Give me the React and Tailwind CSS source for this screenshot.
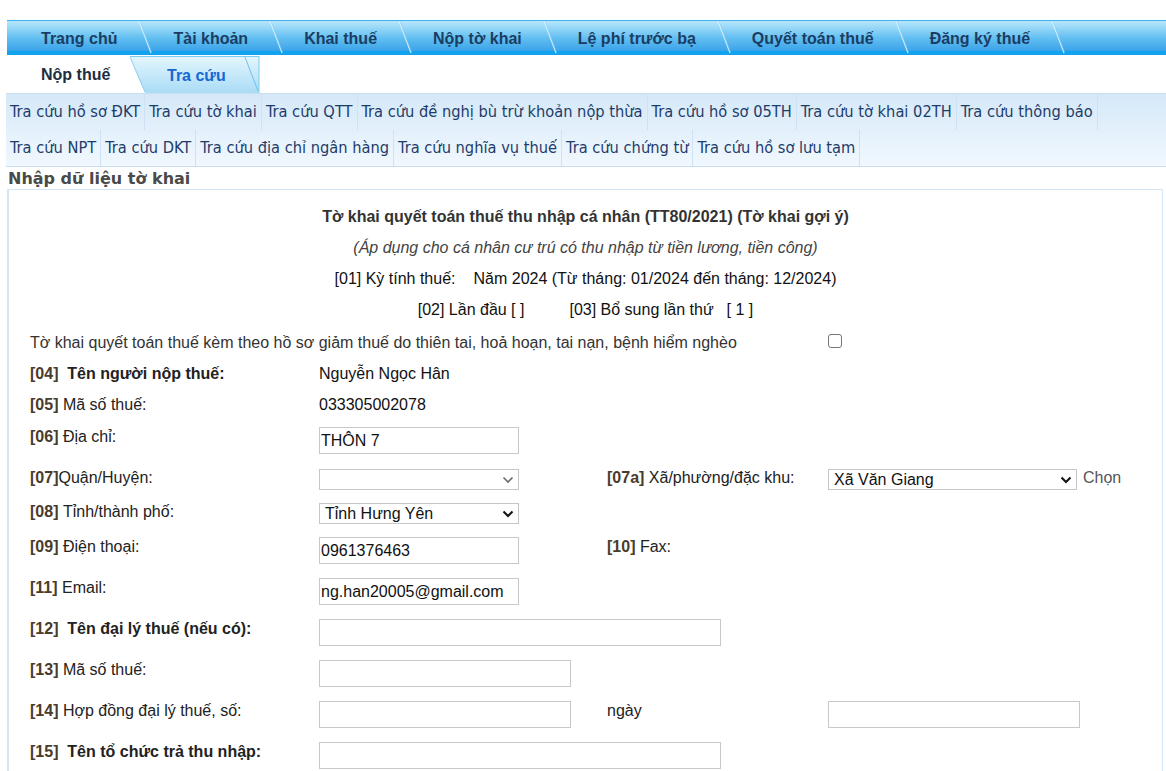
import React from 'react';

const topTabs = ['Trang chủ', 'Tài khoản', 'Khai thuế', 'Nộp tờ khai', 'Lệ phí trước bạ', 'Quyết toán thuế', 'Đăng ký thuế'];

const subRow1 = [
  'Tra cứu hồ sơ ĐKT',
  'Tra cứu tờ khai',
  'Tra cứu QTT',
  'Tra cứu đề nghị bù trừ khoản nộp thừa',
  'Tra cứu hồ sơ 05TH',
  'Tra cứu tờ khai 02TH',
  'Tra cứu thông báo',
];

const subRow2 = [
  'Tra cứu NPT',
  'Tra cứu DKT',
  'Tra cứu địa chỉ ngân hàng',
  'Tra cứu nghĩa vụ thuế',
  'Tra cứu chứng từ',
  'Tra cứu hồ sơ lưu tạm',
];

function Sep() {
  return (
    <svg className="absolute right-[-7px] top-0 h-[35px] w-[14px]" viewBox="0 0 14 35">
      <line x1="1" y1="0" x2="13" y2="32" stroke="#dcf4fe" strokeWidth="1.2" opacity="0.9" />
      <line x1="2" y1="0" x2="14" y2="32" stroke="#7cc8f0" strokeWidth="0.8" opacity="0.5" />
    </svg>
  );
}

function Code({ children }) {
  return <b className="text-[#4a3b2b]">{children}</b>;
}

function Input({ w = 'w-[200px]', value = '' }) {
  return (
    <div className={`${w} h-[27px] border border-[#c8c8c8] bg-white px-[1px] leading-[25px] text-[#111]`}>
      {value}
    </div>
  );
}

function Select({ w = 'w-[200px]', value = '', faded = false }) {
  return (
    <div className={`${w} h-[21px] border border-[#c6c6c6] bg-white flex items-center justify-between pl-[5px] pr-[4px] text-[#111] leading-[19px]`}>
      <span>{value}</span>
      <svg width="12" height="8" viewBox="0 0 12 8">
        <path d="M1.5 1.5 L6 6 L10.5 1.5" fill="none" stroke={faded ? '#6b6b6b' : '#111'} strokeWidth={faded ? 1.6 : 2} />
      </svg>
    </div>
  );
}

export default function App() {
  return (
    <div className="w-[1166px] h-[771px] overflow-hidden bg-white font-['Liberation_Sans',Arial,sans-serif] text-[16px]">
      <div className="h-[20px]" />

      {/* top navigation */}
      <div className="ml-[7px] pl-[6px] h-[35px] flex border-t border-[#3eb0f0] bg-gradient-to-b from-[#b6e7fb] via-[#62bff1] to-[#2a9ae6] shadow-[inset_0_-4px_0_#12a3ef]">
        {topTabs.map((t) => (
          <div key={t} className="relative px-[28px] h-full flex items-center pt-[1px] font-bold text-[#1b3d63] whitespace-nowrap">
            {t}
            <Sep />
          </div>
        ))}
      </div>

      {/* second level */}
      <div className="h-[38px] flex items-end">
        <div className="w-[130px] h-full flex items-center pl-[41px] pt-[2px] font-bold text-[#1d2d42]">Nộp thuế</div>
        <div className="relative w-[130px] h-[37px] flex items-center pl-[37px] pt-[2px] font-bold text-[#1767d2]">
          <svg className="absolute inset-0" width="130" height="37" viewBox="0 0 130 37">
            <defs>
              <linearGradient id="tg" x1="0" y1="0" x2="0" y2="1">
                <stop offset="0" stopColor="#e3f5fd" />
                <stop offset="1" stopColor="#a9dcf6" />
              </linearGradient>
            </defs>
            <path d="M0 1 L129 1 L129 37 L15 37 Z" fill="url(#tg)" />
            <path d="M0 1 L15 36" stroke="#8fd0f2" strokeWidth="1" />
            <path d="M115 1 L128 35" stroke="#6cc1ee" strokeWidth="1" />
            <path d="M0 0.5 L129 0.5 M129 0 L129 37" stroke="#7ccbf1" strokeWidth="1" />
          </svg>
          <span className="relative">Tra cứu</span>
        </div>
      </div>

      {/* sub menu */}
      <div className="ml-[6px] h-[74px] border-y border-[#c9def0] bg-gradient-to-b from-[#d5e8f8] to-[#f1f8fe] font-['Tahoma','DejaVu_Sans_Condensed',sans-serif] text-[16.3px] text-[#1e3c6a]">
        {[subRow1, subRow2].map((row, i) => (
          <div key={i} className="h-[36px] flex">
            {row.map((s) => (
              <div key={s} className="px-[4px] pt-[1px] h-full flex items-center border-r border-[#cfe2f3] whitespace-nowrap">
                {s}
              </div>
            ))}
          </div>
        ))}
      </div>

      {/* section header */}
      <div className="ml-[8px] h-[22px] pt-[2px] flex items-center font-['DejaVu_Sans',Verdana,sans-serif] font-bold text-[#4a4a4a] text-[16px]">
        Nhập dữ liệu tờ khai
      </div>

      {/* panel */}
      <div className="ml-[7px] mr-[3px] border-l-2 border-r border-t border-[#d4e6f6] text-[#222] pt-[11px]">
        <div className="flex flex-col items-center">
          <div className="h-[31px] flex items-center font-bold text-[#333]">
            Tờ khai quyết toán thuế thu nhập cá nhân (TT80/2021) (Tờ khai gợi ý)
          </div>
          <div className="h-[31px] flex items-center italic text-[#444]">
            (Áp dụng cho cá nhân cư trú có thu nhập từ tiền lương, tiền công)
          </div>
          <div className="h-[31px] flex items-center gap-[18px] text-[#111]">
            <span>[01] Kỳ tính thuế:</span>
            <span>Năm 2024 (Từ tháng: 01/2024 đến tháng: 12/2024)</span>
          </div>
          <div className="h-[31px] flex items-center text-[#111]">
            <span>[02] Lần đầu [ ]</span>
            <span className="ml-[45px]">[03] Bổ sung lần thứ</span>
            <span className="ml-[13px]">[ 1 ]</span>
          </div>
        </div>

        <div className="pl-[21px] grid grid-cols-[289px_288px_221px_1fr] text-[#222] leading-[18px]">
          {/* checkbox row */}
          <div className="col-span-3 h-[33px] flex items-center pt-[2px] text-[#333]">
            Tờ khai quyết toán thuế kèm theo hồ sơ giảm thuế do thiên tai, hoả hoạn, tai nạn, bệnh hiểm nghèo
          </div>
          <div className="h-[33px] flex items-center">
            <div className="w-[14px] h-[14px] border border-[#767676] rounded-[3px] bg-white mb-[2px]" />
          </div>

          <div className="col-span-1 h-[31px] flex items-center font-bold">
            <Code>[04]</Code>&nbsp;&nbsp;Tên người nộp thuế:
          </div>
          <div className="col-span-3 h-[31px] flex items-center text-[#111]">Nguyễn Ngọc Hân</div>

          <div className="h-[31px] flex items-center">
            <Code>[05]</Code>&nbsp;Mã số thuế:
          </div>
          <div className="col-span-3 h-[31px] flex items-center text-[#111]">033305002078</div>

          {/* [06] */}
          <div className="h-[41px] pt-[8px]">
            <Code>[06]</Code>&nbsp;Địa chỉ:
          </div>
          <div className="col-span-3 h-[41px] pt-[7px]">
            <Input value="THÔN 7" />
          </div>

          {/* [07] */}
          <div className="h-[34px] pt-[8px]">
            <Code>[07]</Code>Quận/Huyện:
          </div>
          <div className="h-[34px] pt-[8px]">
            <Select faded />
          </div>
          <div className="h-[34px] pt-[8px]">
            <Code>[07a]</Code>&nbsp;Xã/phường/đặc khu:
          </div>
          <div className="h-[34px] pt-[8px] flex items-start">
            <Select w="w-[249px]" value="Xã Văn Giang" />
            <span className="ml-[6px] text-[#555]">Chọn</span>
          </div>

          {/* [08] */}
          <div className="h-[34px] pt-[8px]">
            <Code>[08]</Code>&nbsp;Tỉnh/thành phố:
          </div>
          <div className="col-span-3 h-[34px] pt-[8px]">
            <Select value="Tỉnh Hưng Yên" />
          </div>

          {/* [09] */}
          <div className="h-[41px] pt-[9px]">
            <Code>[09]</Code>&nbsp;Điện thoại:
          </div>
          <div className="h-[41px] pt-[8px]">
            <Input value="0961376463" />
          </div>
          <div className="col-span-2 h-[41px] pt-[9px]">
            <Code>[10]</Code>&nbsp;Fax:
          </div>

          {/* [11] */}
          <div className="h-[41px] pt-[9px]">
            <Code>[11]</Code>&nbsp;Email:
          </div>
          <div className="col-span-3 h-[41px] pt-[8px]">
            <Input value="ng.han20005@gmail.com" />
          </div>

          {/* [12] */}
          <div className="h-[41px] pt-[9px] font-bold">
            <Code>[12]</Code>&nbsp;&nbsp;Tên đại lý thuế (nếu có):
          </div>
          <div className="col-span-3 h-[41px] pt-[8px]">
            <Input w="w-[402px]" />
          </div>

          {/* [13] */}
          <div className="h-[41px] pt-[9px]">
            <Code>[13]</Code>&nbsp;Mã số thuế:
          </div>
          <div className="col-span-3 h-[41px] pt-[8px]">
            <Input w="w-[252px]" />
          </div>

          {/* [14] */}
          <div className="h-[41px] pt-[9px]">
            <Code>[14]</Code>&nbsp;Hợp đồng đại lý thuế, số:
          </div>
          <div className="h-[41px] pt-[8px]">
            <Input w="w-[252px]" />
          </div>
          <div className="h-[41px] pt-[9px]">ngày</div>
          <div className="h-[41px] pt-[8px]">
            <Input w="w-[252px]" />
          </div>

          {/* [15] */}
          <div className="h-[41px] pt-[9px] font-bold">
            <Code>[15]</Code>&nbsp;&nbsp;Tên tổ chức trả thu nhập:
          </div>
          <div className="col-span-3 h-[41px] pt-[8px]">
            <Input w="w-[402px]" />
          </div>
        </div>
      </div>
    </div>
  );
}
